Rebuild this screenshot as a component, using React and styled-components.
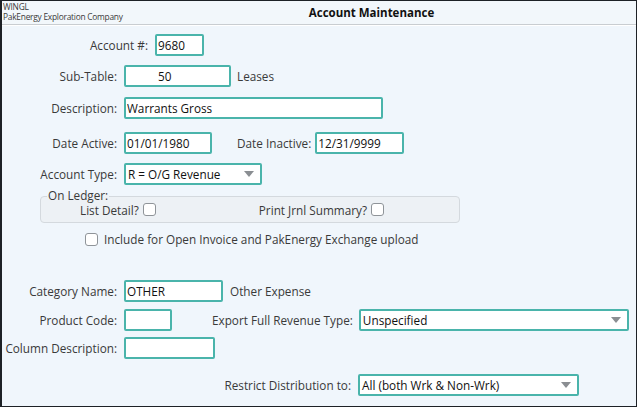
import React from "react";
import styled, { createGlobalStyle } from "styled-components";

const Global = createGlobalStyle`
  html, body { margin: 0; padding: 0; background: #f0f6fc; }
  * { box-sizing: border-box; }
  body { font-family: "Open Sans", "Noto Sans", sans-serif; font-size: 11.75px; color: #3a3a3a; }
`;

const Window = styled.div`
  width: 637px;
  height: 407px;
  border: 1px solid #1d2126;
  border-left-width: 2px;
  background: #f0f6fc;
  overflow: hidden;
`;

const Header = styled.div`
  display: flex;
  height: 24px;
  background: #f2f7fb;
  border-bottom: 1px solid #c9cdd1;
  box-shadow: 0 1px 0 #ffffff;
`;

const Company = styled.div`
  width: 121px;
  flex: none;
  padding: 1px 0 0 1px;
  font-size: 8.4px;
  line-height: 10px;
  color: #3a3a3a;
  letter-spacing: -0.25px;
  white-space: nowrap;
`;

const Title = styled.div`
  flex: 1;
  text-align: center;
  padding-right: 16px;
  font-weight: 700;
  font-size: 11.5px;
  line-height: 24px;
  color: #111;
`;

const Body = styled.div`
  display: flex;
  flex-direction: column;
`;

const Row = styled.div`
  display: flex;
  align-items: center;
  height: 22px;
  margin-top: ${(p) => p.$mt || 0}px;
`;

const Label = styled.div`
  width: ${(p) => p.$w || 122}px;
  flex: none;
  text-align: right;
  padding-right: 7px;
  white-space: nowrap;
  color: #3a3a3a;
`;

const Text = styled.div`
  white-space: nowrap;
  margin-left: ${(p) => p.$ml || 0}px;
  color: #3a3a3a;
`;

const Field = styled.input`
  width: ${(p) => p.$w}px;
  height: 22px;
  flex: none;
  border: 2px solid #4ab4ab;
  border-radius: 2px;
  background: #fff;
  padding: 0 0 0 ${(p) => (p.$pl != null ? p.$pl : 1)}px;
  margin-left: ${(p) => p.$ml || 0}px;
  font: inherit;
  color: #111;
  outline: none;
`;

const Select = styled.div`
  width: ${(p) => p.$w}px;
  height: 22px;
  flex: none;
  display: flex;
  align-items: center;
  justify-content: space-between;
  border: 2px solid #4ab4ab;
  border-radius: 2px;
  background: #fff;
  padding: 0 6px 0 2px;
  margin-left: ${(p) => p.$ml || 0}px;
  color: #111;
  white-space: nowrap;
`;

const Arrow = () => (
  <svg width="10" height="6" viewBox="0 0 10 6">
    <path d="M0 0 L10 0 L5 6 Z" fill="#8a8e92" />
  </svg>
);

const Group = styled.div`
  position: relative;
  margin: 11px 0 0 38px;
  width: 420px;
  height: 27px;
  border: 1px solid #d4d9de;
  border-radius: 4px;
  background: #edf1f5;
  display: flex;
  align-items: center;
`;

const Legend = styled.span`
  position: absolute;
  top: -9px;
  left: 6px;
  padding: 0 1px;
  line-height: 14px;
  background: linear-gradient(#f0f6fc 50%, #edf1f5 50%);
  color: #3a3a3a;
`;

const Check = styled.span`
  display: inline-block;
  width: 13px;
  height: 13px;
  flex: none;
  border: 1px solid #8f9499;
  border-radius: 3px;
  background: #fff;
  margin-left: ${(p) => p.$ml || 0}px;
`;

const CheckRow = styled.div`
  display: flex;
  align-items: center;
  height: 14px;
  margin-top: ${(p) => p.$mt || 0}px;
  padding-left: ${(p) => p.$pl || 0}px;
`;

export default function App() {
  return (
    <>
      <Global />
      <Window>
        <Header>
          <Company>
            WINGL
            <br />
            PakEnergy Exploration Company
          </Company>
          <Title>Account Maintenance</Title>
        </Header>
        <Body>
          <Row $mt={9}>
            <Label $w={153}>Account #:</Label>
            <Field $w={49} defaultValue="9680" readOnly />
          </Row>
          <Row $mt={9}>
            <Label>Sub-Table:</Label>
            <Field $w={107} $pl={32} defaultValue="50" readOnly />
            <Text $ml={6}>Leases</Text>
          </Row>
          <Row $mt={10}>
            <Label>Description:</Label>
            <Field $w={259} defaultValue="Warrants Gross" readOnly />
          </Row>
          <Row $mt={13}>
            <Label>Date Active:</Label>
            <Field $w={88} defaultValue="01/01/1980" readOnly />
            <Text $ml={25}>Date Inactive:</Text>
            <Field $w={89} $ml={4} defaultValue="12/31/9999" readOnly />
          </Row>
          <Row $mt={9}>
            <Label>Account Type:</Label>
            <Select $w={138}>
              R = O/G Revenue
              <Arrow />
            </Select>
          </Row>
          <Group>
            <Legend>On Ledger:</Legend>
            <CheckRow $pl={39}>
              <Text>List Detail?</Text>
              <Check $ml={4} />
              <Text $ml={103}>Print Jrnl Summary?</Text>
              <Check $ml={4} />
            </CheckRow>
          </Group>
          <CheckRow $mt={9} $pl={83}>
            <Check />
            <Text $ml={6}>Include for Open Invoice and PakEnergy Exchange upload</Text>
          </CheckRow>
          <Row $mt={34}>
            <Label>Category Name:</Label>
            <Field $w={99} defaultValue="OTHER" readOnly />
            <Text $ml={7}>Other Expense</Text>
          </Row>
          <Row $mt={7}>
            <Label>Product Code:</Label>
            <Field $w={48} readOnly />
            <Text $ml={40}>Export Full Revenue Type:</Text>
            <Select $w={270} $ml={6}>
              Unspecified
              <Arrow />
            </Select>
          </Row>
          <Row $mt={6}>
            <Label>Column Description:</Label>
            <Field $w={91} readOnly />
          </Row>
          <Row $mt={15}>
            <Label $w={356}>Restrict Distribution to:</Label>
            <Select $w={221}>
              All (both Wrk &amp; Non-Wrk)
              <Arrow />
            </Select>
          </Row>
        </Body>
      </Window>
    </>
  );
}
